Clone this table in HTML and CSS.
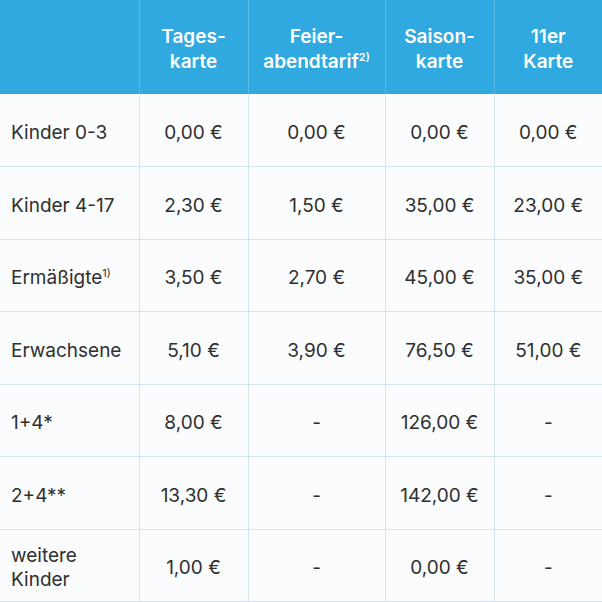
FILE: index.html
```html
<!DOCTYPE html>
<html lang="de">
<head>
<meta charset="utf-8">
<link rel="stylesheet" href="styles.css">
</head>
<body>
<table class="prices">
  <colgroup>
    <col class="c-label"><col class="c-a"><col class="c-b"><col class="c-c"><col class="c-d">
  </colgroup>
  <thead>
    <tr>
      <th></th>
      <th>Tages-<br>karte</th>
      <th>Feier-<br>abendtarif<sup>2)</sup></th>
      <th>Saison-<br>karte</th>
      <th>11er<br>Karte</th>
    </tr>
  </thead>
  <tbody>
    <tr><td>Kinder 0-3</td><td>0,00 €</td><td>0,00 €</td><td>0,00 €</td><td>0,00 €</td></tr>
    <tr><td>Kinder 4-17</td><td>2,30 €</td><td>1,50 €</td><td>35,00 €</td><td>23,00 €</td></tr>
    <tr><td>Ermäßigte<sup>1)</sup></td><td>3,50 €</td><td>2,70 €</td><td>45,00 €</td><td>35,00 €</td></tr>
    <tr><td>Erwachsene</td><td>5,10 €</td><td>3,90 €</td><td>76,50 €</td><td>51,00 €</td></tr>
    <tr><td>1+4*</td><td>8,00 €</td><td>-</td><td>126,00 €</td><td>-</td></tr>
    <tr><td>2+4**</td><td>13,30 €</td><td>-</td><td>142,00 €</td><td>-</td></tr>
    <tr><td>weitere<br>Kinder</td><td>1,00 €</td><td>-</td><td>0,00 €</td><td>-</td></tr>
  </tbody>
</table>
</body>
</html>
```
FILE: styles.css
```css
html, body {
  margin: 0;
  padding: 0;
  background: #fbfcfd;
}
.prices {
  width: 602px;
  border-collapse: collapse;
  table-layout: fixed;
  font-family: "Inter", "Roboto", sans-serif;
  font-size: 19px;
  line-height: 24px;
  color: #2f2f2f;
}
.c-label { width: 139px; }
.c-a { width: 109px; }
.c-b { width: 137px; }
.c-c { width: 109px; }
.c-d { width: 108px; }
.prices th {
  background: #2fa9e0;
  color: #ffffff;
  font-weight: 600;
  line-height: 25px;
  height: 94px;
  padding: 4px 2px 0;
  text-align: center;
  border-left: 1px solid #5cbbe6;
  box-sizing: border-box;
}
.prices th:first-child { border-left: none; }
.prices td {
  height: 72.5px;
  padding: 6px 4px 0;
  text-align: center;
  border: 1px solid #d6e3eb;
  box-sizing: border-box;
}
.prices td:first-child {
  text-align: left;
  padding-left: 11px;
  border-left: none;
}
.prices td:last-child { border-right: none; }
.prices tbody tr:first-child td { border-top: none; }
.prices sup {
  font-size: 11px;
  line-height: 0;
  vertical-align: 7px;
}
```
